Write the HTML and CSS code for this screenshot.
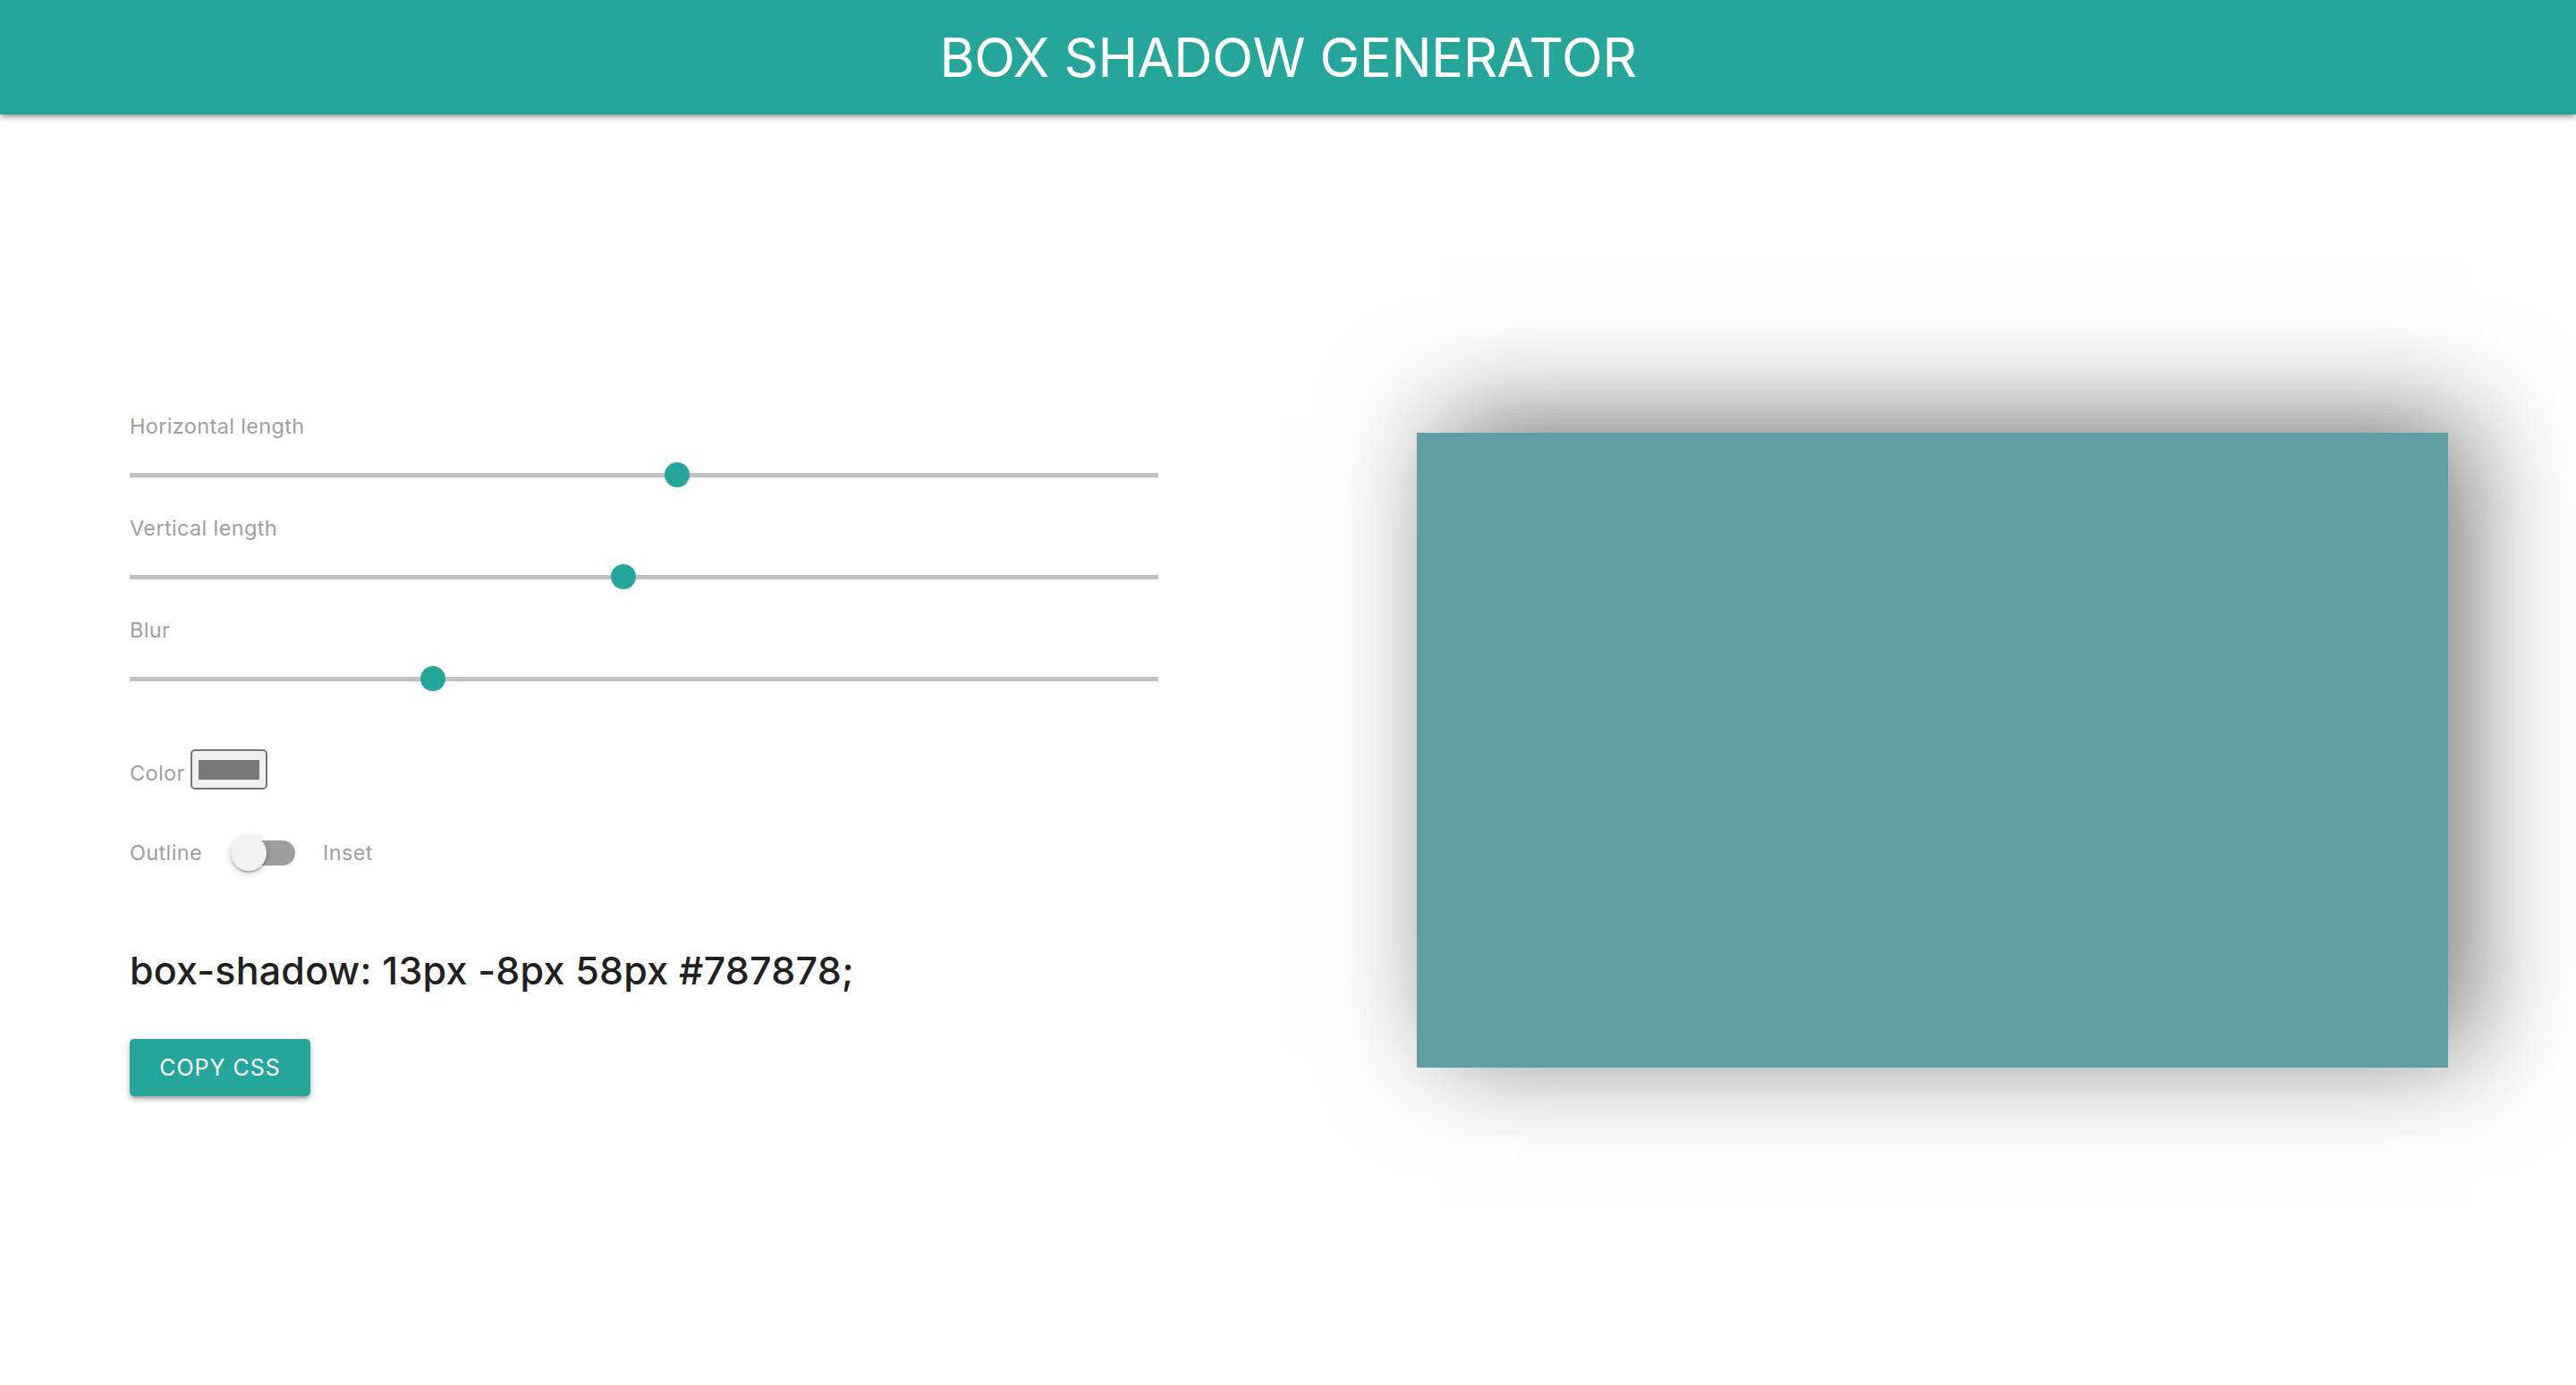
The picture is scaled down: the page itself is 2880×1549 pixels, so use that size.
FILE: index.html
```html
<!DOCTYPE html>
<html lang="en">
<head>
<meta charset="utf-8">
<title>Box Shadow Generator</title>
<link rel="stylesheet" href="styles.css">
</head>
<body>
<header class="topbar">
  <h1 class="brand">BOX SHADOW GENERATOR</h1>
</header>
<main class="page">
  <section class="controls">
    <div class="field">
      <div class="label">Horizontal length</div>
      <div class="slider"><div class="track"></div><div class="thumb" style="left: 53.25%"></div></div>
    </div>
    <div class="field">
      <div class="label">Vertical length</div>
      <div class="slider"><div class="track"></div><div class="thumb" style="left: 48%"></div></div>
    </div>
    <div class="field">
      <div class="label">Blur</div>
      <div class="slider"><div class="track"></div><div class="thumb" style="left: 29.5%"></div></div>
    </div>
    <div class="color-row">
      <span class="text label-color">Color</span>
      <div class="color-input"><div class="swatch"></div></div>
    </div>
    <div class="switch-row">
      <span class="text">Outline</span>
      <div class="lever"><div class="knob"></div></div>
      <span class="text">Inset</span>
    </div>
    <div class="code">box-shadow: 13px -8px 58px #787878;</div>
    <button class="btn">COPY CSS</button>
  </section>
  <section class="preview">
    <div class="box"></div>
  </section>
</main>
</body>
</html>
```

FILE: styles.css
```css
html, body {
  margin: 0;
  padding: 0;
  background: #ffffff;
}
body {
  font-family: Inter, "Noto Sans", Roboto, sans-serif;
  height: 1549px;
  overflow: hidden;
}
.topbar {
  height: 128px;
  background: #26a69a;
  display: flex;
  align-items: center;
  justify-content: center;
  box-shadow: 0 4px 4px 0 rgba(0,0,0,0.14), 0 6px 2px -4px rgba(0,0,0,0.12), 0 2px 10px 0 rgba(0,0,0,0.2);
  position: relative;
  z-index: 2;
}
.brand {
  margin: 0;
  color: #ffffff;
  font-weight: 400;
  font-size: 60px;
  line-height: 1;
  letter-spacing: -0.5px;
}
.page {
  display: grid;
  grid-template-columns: 1440px 1440px;
  height: 1421px;
}
.controls {
  padding: 335px 0 0 145px;
  width: 1150px;
  display: flex;
  flex-direction: column;
}
.field {
  display: flex;
  flex-direction: column;
  margin-bottom: 32px;
}
.label, .text {
  color: #9e9e9e;
  font-size: 23.5px;
  letter-spacing: 0.35px;
  line-height: 28px;
}
.label {
  margin-bottom: 26px;
}
.slider {
  position: relative;
  height: 28px;
}
.track {
  position: absolute;
  left: 0;
  right: 0;
  top: 12px;
  height: 5px;
  background: #c2c0c2;
}
.thumb {
  position: absolute;
  top: 0;
  width: 28px;
  height: 28px;
  margin-left: -14px;
  border-radius: 50%;
  background: #26a69a;
}
.color-row {
  display: flex;
  align-items: center;
  gap: 6px;
  margin-top: 33px;
  height: 45px;
}
.label-color {
  padding-top: 8px;
}
.color-input {
  width: 82px;
  height: 41px;
  border: 2px solid #767676;
  border-radius: 5px;
  background: #efefef;
  display: flex;
  align-items: center;
  justify-content: center;
}
.swatch {
  width: 68px;
  height: 22px;
  background: #787878;
}
.switch-row {
  display: flex;
  align-items: center;
  margin-top: 51px;
  height: 40px;
}
.lever {
  position: relative;
  width: 62px;
  height: 28px;
  border-radius: 14px;
  background: #9e9e9e;
  margin: 0 31px 0 42px;
}
.knob {
  position: absolute;
  left: -10px;
  top: -6px;
  width: 40px;
  height: 40px;
  border-radius: 50%;
  background: #f1f1f1;
  box-shadow: 0 2px 2px 0 rgba(0,0,0,0.14), 0 4px 2px -2px rgba(0,0,0,0.12), 0 2px 8px 0 rgba(0,0,0,0.2);
}
.code {
  margin-top: 86px;
  font-size: 43px;
  font-weight: 500;
  line-height: 50px;
  color: #212121;
  letter-spacing: 0.2px;
}
.btn {
  align-self: flex-start;
  margin-top: 52px;
  height: 64px;
  width: 202px;
  padding: 0;
  border: none;
  border-radius: 5px;
  background: #26a69a;
  color: #ffffff;
  font-family: inherit;
  font-size: 25px;
  letter-spacing: 1px;
  box-shadow: 0 4px 4px 0 rgba(0,0,0,0.14), 0 6px 2px -4px rgba(0,0,0,0.12), 0 2px 10px 0 rgba(0,0,0,0.2);
}
.preview {
  display: flex;
  align-items: center;
  justify-content: center;
}
.box {
  width: 1153px;
  height: 710px;
  background: #5f9ea0;
  box-shadow: 26px -16px 116px #787878;
}
```
